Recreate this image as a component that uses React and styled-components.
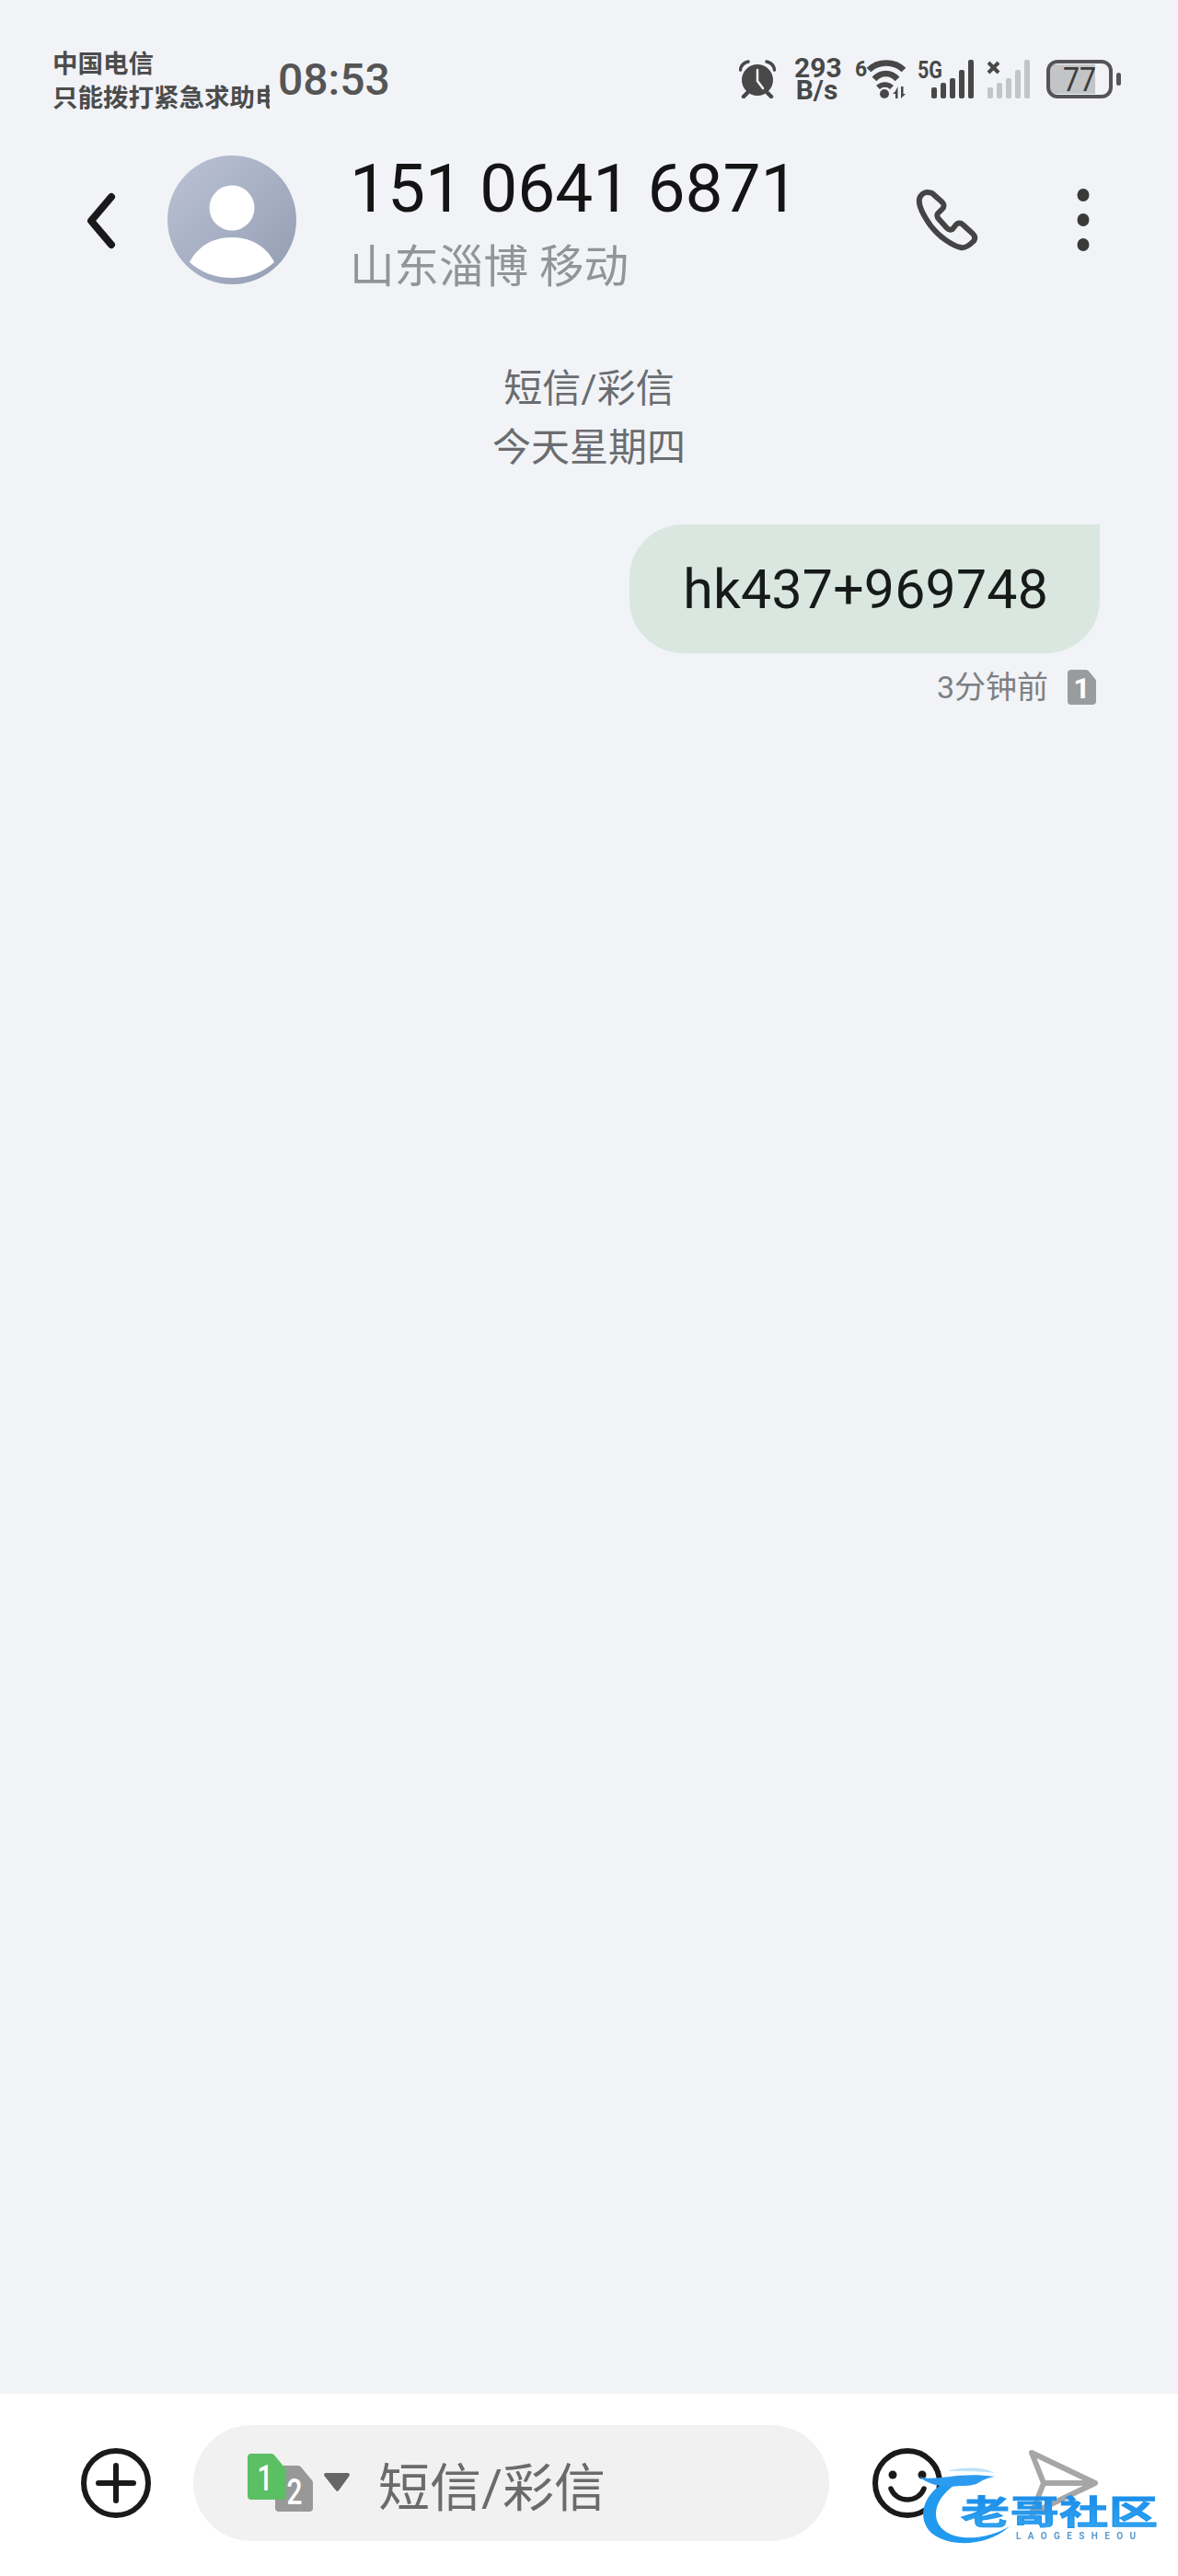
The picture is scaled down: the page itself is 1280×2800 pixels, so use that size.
import React from 'react';
import styled, { createGlobalStyle } from 'styled-components';

const GlobalStyle = createGlobalStyle`
  html, body {
    margin: 0;
    padding: 0;
    background: #f1f3f7;
  }
  * {
    box-sizing: border-box;
  }
`;

const Page = styled.div`
  display: flex;
  flex-direction: column;
  width: 1280px;
  height: 2800px;
  overflow: hidden;
  background: #f1f3f7;
  font-family: Roboto, "Noto Sans CJK SC", sans-serif;
`;

const StatusBar = styled.div`
  display: flex;
  align-items: center;
  height: 72px;
  margin-top: 50px;
  padding: 0 62px 0 57px;
  color: #484848;
`;

const Carrier = styled.div`
  width: 236px;
  overflow: hidden;
  white-space: nowrap;
  font-size: 27.500px;
  line-height: 37px;
  font-weight: 700;
  color: #4c4c4c;
  margin-top: 3px;
`;

const Clock = styled.div`
  margin: 2px 0 0 9px;
  font-size: 48px;
  font-weight: 500;
  line-height: 72px;
  color: #555;
`;

const StatusIcons = styled.div`
  display: flex;
  align-items: center;
  margin-left: auto;
`;

const Speed = styled.div`
  width: 49px;
  margin: 0 17px 0 20px;
  text-align: center;
  font-size: 30px;
  line-height: 24px;
  font-weight: 700;
  white-space: nowrap;
`;

const Spacer = styled.div`
  width: ${(p) => p.$w}px;
  flex: none;
`;

const Header = styled.header`
  display: flex;
  align-items: flex-start;
  padding: 47px 96px 0 94px;
`;

const BackIcon = styled.svg`
  width: 32px;
  height: 62px;
  margin: 40px 56px 0 0;
  flex: none;
`;

const Avatar = styled.svg`
  width: 140px;
  height: 140px;
  flex: none;
`;

const Contact = styled.div`
  margin-left: 58px;
`;

const Phone = styled.div`
  font-size: 73px;
  line-height: 72px;
  letter-spacing: 0;
  color: #141414;
  white-space: nowrap;
`;

const Place = styled.div`
  margin-top: 19px;
  font-size: 48.500px;
  line-height: 62px;
  color: #929497;
  white-space: nowrap;
`;

const Actions = styled.div`
  display: flex;
  align-items: center;
  gap: 107px;
  margin: 36px 0 0 auto;
`;

const Feed = styled.main`
  flex: 1;
  display: flex;
  flex-direction: column;
  padding-top: 69px;
`;

const Notice = styled.div`
  text-align: center;
  font-size: 42px;
  line-height: 64px;
  color: #6a6c6f;
`;

const Bubble = styled.div`
  align-self: flex-end;
  margin: 51px 85px 0 0;
  height: 140px;
  padding: 0 56px 0 58px;
  display: flex;
  align-items: center;
  border-radius: 58px 0 58px 58px;
  background: #d9e7e0;
  font-size: 59px;
  letter-spacing: 0.2px;
  color: #161a18;
`;

const Meta = styled.div`
  align-self: flex-end;
  display: flex;
  align-items: center;
  gap: 21px;
  margin: 18px 89px 0 0;
  font-size: 34px;
  line-height: 38px;
  color: #7d7f82;
`;

const Composer = styled.footer`
  position: relative;
  display: flex;
  align-items: center;
  height: 198px;
  padding: 0 0 4px 88px;
  background: #fff;
`;

const Field = styled.div`
  display: flex;
  align-items: center;
  flex: none;
  width: 691px;
  height: 126px;
  margin: 0 47px 0 46px;
  padding-left: 59px;
  border-radius: 63px;
  background: #f1f1f1;
`;

const Placeholder = styled.span`
  margin-left: 30px;
  font-size: 56px;
  color: #6b6b6b;
`;

const Send = styled.svg`
  width: 78px;
  height: 74px;
  margin-left: 92px;
  flex: none;
`;

const Watermark = styled.svg`
  position: absolute;
  left: 999px;
  top: 78px;
  width: 262px;
  height: 90px;
  filter: blur(0.7px);
`;

function Alarm() {
  return (
    <svg width="40" height="42" viewBox="0 0 40 42">
      <circle cx="20" cy="22" r="17" fill="#484848" />
      <path d="M20 11v12l6 8" fill="none" stroke="#f1f3f7" strokeWidth="2.500" strokeLinecap="round" />
      <path d="M1.500 11C2 6 6 3 10 2M38.500 11C38 6 34 3 30 2" fill="none" stroke="#484848" strokeWidth="3.500" strokeLinecap="round" />
      <path d="M9 36l-4 4M31 36l4 4" stroke="#484848" strokeWidth="4.500" strokeLinecap="round" />
    </svg>
  );
}

function Wifi() {
  return (
    <svg width="56" height="44" viewBox="0 0 56 44" style={{ overflow: 'visible' }}>
      <text x="0" y="19" fontSize="23" fontWeight="700" fill="#484848" fontFamily="Roboto">6</text>
      <path d="M15 12C25 2 43 2 53 12" fill="none" stroke="#484848" strokeWidth="6.500" />
      <path d="M21 22C28 14 39 14 46 22" fill="none" stroke="#484848" strokeWidth="6.500" />
      <path d="M25 31C29 27 36 27 40 31" fill="none" stroke="#484848" strokeWidth="5.500" />
      <circle cx="32" cy="38" r="5" fill="#484848" />
      <path d="M44 35l-3 3h3v5h2.500v-13zM50 30v13l5-5h-2.500v-8z" fill="#484848" />
    </svg>
  );
}

function Bars({ color, children }) {
  const heights = [12, 17, 22, 31, 42];
  return (
    <svg width="46" height="42" viewBox="0 0 46 42" style={{ overflow: 'visible' }}>
      {heights.map((h, i) => (
        <rect key={i} x={i * 10} y={42 - h} width="6" height={h} rx="2" fill={color} />
      ))}
      {children}
    </svg>
  );
}

function Battery() {
  return (
    <svg width="81" height="42" viewBox="0 0 81 42" style={{ marginLeft: 18 }}>
      <path d="M9 5h44v32H9a5 5 0 0 1-5-5V10a5 5 0 0 1 5-5z" fill="#c3c4c6" />
      <rect x="2" y="2" width="68" height="38" rx="10" fill="none" stroke="#555" strokeWidth="4" />
      <rect x="76" y="14" width="5" height="14" rx="2.500" fill="#555" />
      <text x="36" y="34" textAnchor="middle" fontSize="37" fontFamily="Roboto" fontWeight="400" fill="#3c3c3c" textLength="36" lengthAdjust="spacingAndGlyphs">77</text>
    </svg>
  );
}

function SimChip({ number, color, x, y, w, h, tx, ty }) {
  return (
    <g transform={`translate(${x} ${y})`}>
      <path
        d={`M4 0H${w - 16}a4 4 0 0 1 3 1.500L${w - 1} 16a4 4 0 0 1 1 3V${h - 4}a4 4 0 0 1-4 4H4a4 4 0 0 1-4-4V4a4 4 0 0 1 4-4z`}
        fill={color}
      />
      <text x={tx} y={ty} textAnchor="middle" fontSize="39" fontWeight="500" fontFamily="Roboto" fill="#fff" textLength="17" lengthAdjust="spacingAndGlyphs">
        {number}
      </text>
    </g>
  );
}

function App() {
  return (
    <Page>
      <GlobalStyle />
      <StatusBar>
        <Carrier>
          中国电信
          <br />
          只能拨打紧急求助电话
        </Carrier>
        <Clock>08:53</Clock>
        <StatusIcons>
          <Alarm />
          <Speed>
            293
            <br />
            B/s
          </Speed>
          <Wifi />
          <Spacer $w={12} />
          <svg width="61" height="42" viewBox="0 0 61 42">
            <text x="0" y="20" fontSize="25" fontWeight="700" fontFamily="Roboto" fill="#484848" textLength="27" lengthAdjust="spacingAndGlyphs">5G</text>
            <g transform="translate(15 0)">
              <Bars color="#484848" />
            </g>
          </svg>
          <Spacer $w={15} />
          <Bars color="#c3c4c6">
            <path d="M1 3l11 11M12 3L1 14" stroke="#484848" strokeWidth="4" />
          </Bars>
          <Battery />
        </StatusIcons>
      </StatusBar>

      <Header>
        <BackIcon viewBox="0 0 32 62">
          <path d="M27 5L5 31l22 26" fill="none" stroke="#1a1a1a" strokeWidth="8" strokeLinecap="round" strokeLinejoin="round" />
        </BackIcon>
        <Avatar viewBox="0 0 140 140">
          <defs>
            <linearGradient id="avatarFill" x1="0.1" y1="0.1" x2="0.9" y2="0.9">
              <stop offset="0" stopColor="#b8bfd2" />
              <stop offset="1" stopColor="#96a0b5" />
            </linearGradient>
          </defs>
          <circle cx="70" cy="70" r="70" fill="url(#avatarFill)" />
          <circle cx="70" cy="57" r="24.500" fill="#fff" />
          <path d="M24 116C32 100 48 89 70 89s38 11 46 27C104 127 88 133 70 133s-34-6-46-17z" fill="#fff" />
        </Avatar>
        <Contact>
          <Phone>151 0641 6871</Phone>
          <Place>山东淄博 移动</Place>
        </Contact>
        <Actions>
          <svg width="68" height="68" viewBox="0 0 68 68">
            <path
              d="M12 4C9 4 5 7 4 11C3 16 6 26 16 40C26 53 40 62 49 64C54 65 58 62 63 57C65 54 64 51 62 49L51 39C49 37 46 37 44 39L40 44C38 45 36 45 34 43L25 33C23 31 23 28 24 27L29 22C31 20 31 17 29 15L19 6C17 4 14 4 12 4Z"
              fill="none"
              stroke="#444"
              strokeWidth="6"
              strokeLinejoin="round"
            />
          </svg>
          <svg width="14" height="68" viewBox="0 0 14 68">
            <ellipse cx="7" cy="7" rx="6.500" ry="7" fill="#3a3a3a" />
            <ellipse cx="7" cy="34" rx="6.500" ry="7" fill="#3a3a3a" />
            <ellipse cx="7" cy="61" rx="6.500" ry="7" fill="#3a3a3a" />
          </svg>
        </Actions>
      </Header>

      <Feed>
        <Notice>短信/彩信</Notice>
        <Notice>今天星期四</Notice>
        <Bubble>hk437+969748</Bubble>
        <Meta>
          <span>3分钟前</span>
          <svg width="31" height="38" viewBox="0 0 31 38">
            <path d="M4 0H20a4 4 0 0 1 3 1.500L30 10a4 4 0 0 1 1 3V34a4 4 0 0 1-4 4H4a4 4 0 0 1-4-4V4a4 4 0 0 1 4-4z" fill="#9a9b9d" />
            <text x="15.500" y="31" textAnchor="middle" fontSize="32" fontWeight="700" fontFamily="Roboto" fill="#fff">1</text>
          </svg>
        </Meta>
      </Feed>

      <Composer>
        <svg width="76" height="76" viewBox="0 0 76 76" style={{ flex: 'none' }}>
          <circle cx="38" cy="38" r="35" fill="none" stroke="#1a1a1a" strokeWidth="6" />
          <path d="M19 38h38M38 19v38" stroke="#1a1a1a" strokeWidth="6" strokeLinecap="round" />
        </svg>
        <Field>
          <svg width="112" height="64" viewBox="0 0 112 64" style={{ flex: 'none' }}>
            <SimChip number="2" color="#989898" x={30} y={13} w={41} h={50} tx={21} ty={42} />
            <SimChip number="1" color="#5bbf63" x={0} y={0} w={42} h={50} tx={19} ty={40} />
            <path d="M85 21h24a2 2 0 0 1 1.500 3.200L99 40a2 2 0 0 1-3 0L83.500 24.200A2 2 0 0 1 85 21z" fill="#666" />
          </svg>
          <Placeholder>短信/彩信</Placeholder>
        </Field>
        <svg width="76" height="76" viewBox="0 0 76 76" style={{ flex: 'none' }}>
          <circle cx="38" cy="38" r="35" fill="none" stroke="#1a1a1a" strokeWidth="6" />
          <circle cx="22" cy="29" r="4.500" fill="#1a1a1a" />
          <circle cx="54" cy="29" r="4.500" fill="#1a1a1a" />
          <path d="M20 44C26 60 50 60 56 44" fill="none" stroke="#1a1a1a" strokeWidth="5.500" strokeLinecap="round" />
        </svg>
        <Send viewBox="0 0 78 74">
          <path d="M5 4L74 37L5 70L18 37Z M18 37H74" fill="none" stroke="#a6a6a6" strokeWidth="6" strokeLinejoin="round" />
        </Send>
        <Watermark viewBox="0 0 262 90">
          <defs>
            <linearGradient id="markText" x1="0" y1="0" x2="0" y2="1">
              <stop offset="0" stopColor="#1584e6" />
              <stop offset="1" stopColor="#35aaf2" />
            </linearGradient>
          </defs>
          <path d="M30 17C8 28 -2 50 8 67C20 88 70 92 98 66C75 80 40 84 24 68C12 55 18 34 40 20Z" fill="#2199ee" />
          <path d="M0 12C20 18 40 6 82 12C60 16 70 22 44 22C30 24 10 22 0 12Z" fill="#2b9bef" />
          <path d="M30 6C50 0 72 2 82 8C66 6 48 6 30 6Z" fill="#bfe0f8" />
          <g transform="translate(0 64) scale(1 0.68)">
            <text x="45" y="0" fontSize="53" fontWeight="700" fontFamily="'Noto Sans CJK SC'" fill="url(#markText)" stroke="#1f94ec" strokeWidth="1.500" textLength="214">老哥社区</text>
          </g>
          <text x="105" y="80" fontSize="10" fontWeight="700" fontFamily="Roboto" fill="#5a9bd0" textLength="130">LAOGESHEOU</text>
        </Watermark>
      </Composer>
    </Page>
  );
}

export default App;
